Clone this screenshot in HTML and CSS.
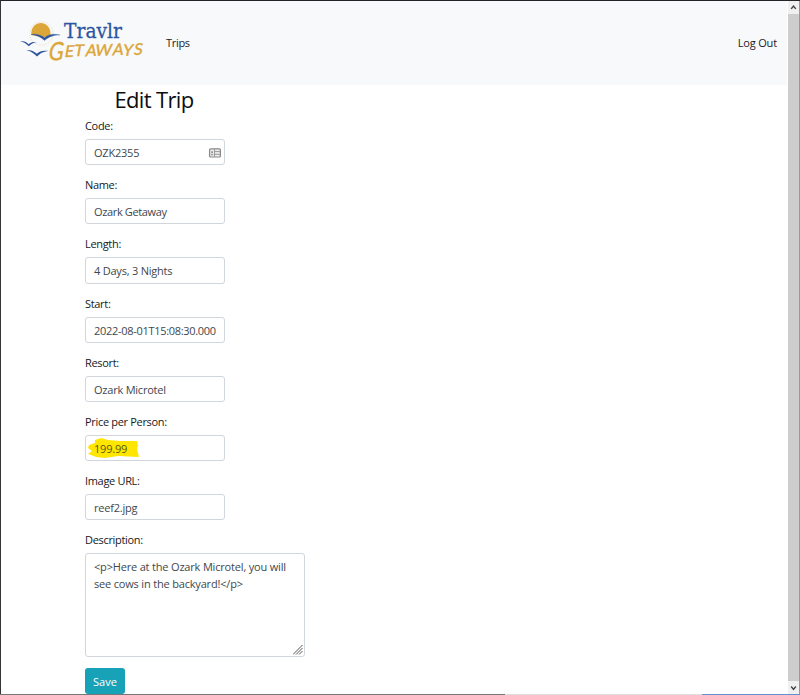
FILE: index.html
```html
<!DOCTYPE html>
<html lang="en">
<head>
<meta charset="utf-8">
<title>Travlr Getaways</title>
<link rel="stylesheet" href="styles.css">
</head>
<body>
<div class="window">
  <div class="page">
    <header class="navbar">
      <svg class="logo" viewBox="0 0 130 50" role="img" aria-label="Travlr Getaways">
        <circle cx="21.300" cy="18.5" r="11.7" fill="none" stroke="#f1dfb8" stroke-width="1" stroke-dasharray="1 1"/>
        <path d="M11.300 20C10 4 31.500 4 30.500 20L24.500 22.500Z" fill="#dca638"/>
        <path d="M11 19.500C16.500 18.500 21 20 24.500 22.800C28 19.500 33 18.500 40 20C33 20 28.500 22 24.500 25.500C21 22 17 20.500 11 19.500Z" fill="#2c55a0" stroke="#2c55a0" stroke-width=".3"/>
        <path d="M0 26C4.500 26 6.500 27.200 8.500 29.200C11 27 13.500 26.700 17 27C13.500 27.500 11 29 8.800 31.200C6 28.500 4 27.200 0 26Z" fill="#2c55a0"/>
        <path d="M6.200 35C11 34.800 14.200 36 16.800 38.800C20 35.500 23.500 35.300 28.500 36C23 36.500 20.200 38.500 17 41.500C13.500 38 11 36.300 6.200 35Z" fill="#2c55a0"/>
        <text class="logo-top" x="44" y="22.500" textLength="58" lengthAdjust="spacingAndGlyphs">Travlr</text>
        <g class="logo-bottom" transform="rotate(-2 30 43) skewX(-12)">
          <text class="logo-initial" x="37" y="45.500" textLength="15" lengthAdjust="spacingAndGlyphs">G</text>
          <text class="logo-rest" x="53 62.500 74 83.500 101 111.500 122.500" y="42.500 42 42.500 42.500 42.500 43.500 43">ETAWAYS</text>
        </g>
      </svg>
      <a class="nav-link">Trips</a>
      <a class="nav-link logout">Log Out</a>
    </header>
    <main class="content">
      <h1 class="title">Edit Trip</h1>
      <div class="group"><div class="label">Code:</div>
        <div class="control"><span>OZK2355</span>
          <svg class="card-icon" viewBox="0 0 12 10"><rect x=".6" y=".8" width="10.800" height="8.200" rx="1" fill="#eee" stroke="#888" stroke-width="1.200"/><path d="M5.500 1V9M5.500 3.600H11M5.500 6.300H11" stroke="#999" fill="none"/><path d="M2 7.200V6.300H4.200V7.200ZM2.300 3.200H3.900V5.300H2.300Z" fill="#888"/></svg>
        </div></div>
      <div class="group"><div class="label">Name:</div><div class="control"><span class="tight">Ozark Getaway</span></div></div>
      <div class="group"><div class="label">Length:</div><div class="control"><span>4 Days, 3 Nights</span></div></div>
      <div class="group"><div class="label">Start:</div><div class="control"><span class="date">2022-08-01T15:08:30.000</span></div></div>
      <div class="group"><div class="label">Resort:</div><div class="control"><span>Ozark Microtel</span></div></div>
      <div class="group"><div class="label">Price per Person:</div>
        <div class="control">
          <svg class="marker" viewBox="0 0 52 20"><path d="M1 7L7 5V2L13 0L20 2L32 3L49 3L50 7L49 11L51 19L30 18L17 20L8 19L3 17L0 16L4 13L0 10Z" fill="#ffe600"/></svg>
          <span class="price">199.99</span>
        </div></div>
      <div class="group"><div class="label">Image URL:</div><div class="control"><span class="file">reef2.jpg</span></div></div>
      <div class="group"><div class="label">Description:</div>
        <div class="control area"><span>&lt;p&gt;Here at the Ozark Microtel, you will</span><span>see cows in the backyard!&lt;/p&gt;</span>
          <svg class="grip" viewBox="0 0 10 10"><path d="M0 9.500L9.500 0M3 9.500L9.500 3M6 9.500L9.500 6" stroke="#555" stroke-width="1" fill="none"/></svg>
        </div></div>
      <button class="save">Save</button>
    </main>
  </div>
  <div class="scrollbar">
    <svg class="arrow" viewBox="0 0 11 14"><path d="M3 8.500L5.500 5.500L8 8.500" fill="none" stroke="#444" stroke-width="1.600"/></svg>
    <div class="thumb"></div>
    <svg class="arrow" viewBox="0 0 11 14"><path d="M3 6L5.500 9L8 6" fill="none" stroke="#444" stroke-width="1.600"/></svg>
  </div>
  <div class="edge"></div>
</div>
<div class="footer-line"><i class="dark"></i><i class="pale"></i><i class="blue"></i></div>
</body>
</html>
```
FILE: styles.css
```css
* { box-sizing: border-box; }
body {
  margin: 0;
  width: 800px;
  height: 695px;
  overflow: hidden;
  background: #fff;
  color: #16191c;
  font: 11px/16.5px "Open Sans", "Noto Sans", sans-serif;
  display: flex;
  flex-direction: column;
}
.window {
  height: 694px;
  display: flex;
  border-top: 1px solid #242328;
  border-left: 1px solid #343436;
}
.page { width: 786px; height: 693px; }
.navbar {
  height: 84px;
  background: #f8f9fb;
  display: flex;
  align-items: center;
  padding: 0 10px 0 19px;
}
.logo { width: 130px; height: 50px; margin-top: -7px; flex: none; overflow: visible; }
.logo-top { font: 21px "DejaVu Serif", serif; fill: #2c55a0; stroke: #2c55a0; stroke-width: .3; }
.logo-bottom { fill: #dca638; stroke: #dca638; stroke-width: .4; }
.logo-initial { font: 25px Lato, sans-serif; }
.logo-rest { font: 16px Lato, sans-serif; }
.nav-link { margin-left: 16px; padding-top: 1px; color: #1c1c1e; letter-spacing: -.15px; }
.nav-link:not(.logout) { letter-spacing: -.3px; }
.logout { margin-left: auto; }
.content { padding-left: 84px; }
.title {
  width: 138px;
  height: 26.5px;
  margin: 0 0 5.5px;
  padding-top: 2px;
  font-size: 22px;
  line-height: 24px;
  letter-spacing: -.65px;
  font-weight: 400;
  text-align: center;
  color: #0c0d0f;
}
.group { margin-bottom: 11px; }
.label { height: 16.5px; margin-bottom: 5.5px; padding-top: 1px; letter-spacing: -.32px; }
.control {
  position: relative;
  width: 140px;
  height: 26.2px;
  border: 1px solid #d0d6dc;
  border-radius: 3px;
  padding: 5px 8px;
  color: #41474d;
  white-space: nowrap;
  letter-spacing: -.22px;
}
.control span { display: block; position: relative; }
.control .date { letter-spacing: -.3px; }
.control .tight { letter-spacing: -.36px; }
.card-icon { position: absolute; right: 3px; top: 8px; width: 12px; height: 10px; }
.marker { position: absolute; left: 2px; top: 2px; width: 52px; height: 20px; }
.control .price { color: #5c5716; }
.area { width: 220px; height: 104px; letter-spacing: -.18px; }
.grip { position: absolute; right: 1px; bottom: 1px; width: 10px; height: 10px; }
.save {
  display: block;
  width: 40px;
  height: 26px;
  padding: 2px 0 0;
  border: 0;
  border-radius: 3px;
  background: #17a2b8;
  color: #fff;
  font: inherit;
}
.scrollbar {
  width: 11px;
  height: 693px;
  margin-left: 1px;
  background: #f0f0f0;
  display: flex;
  flex-direction: column;
}
.arrow { width: 11px; height: 13px; flex: none; }
.thumb { flex: 1; background: #cdcdcd; }
.edge { width: 1px; background: #999; }
.footer-line { display: flex; height: 1px; }
.dark { width: 505px; background: #777; }
.pale { width: 197px; background: #ddd; }
.blue { flex: 1; background: #6690d0; }
```
